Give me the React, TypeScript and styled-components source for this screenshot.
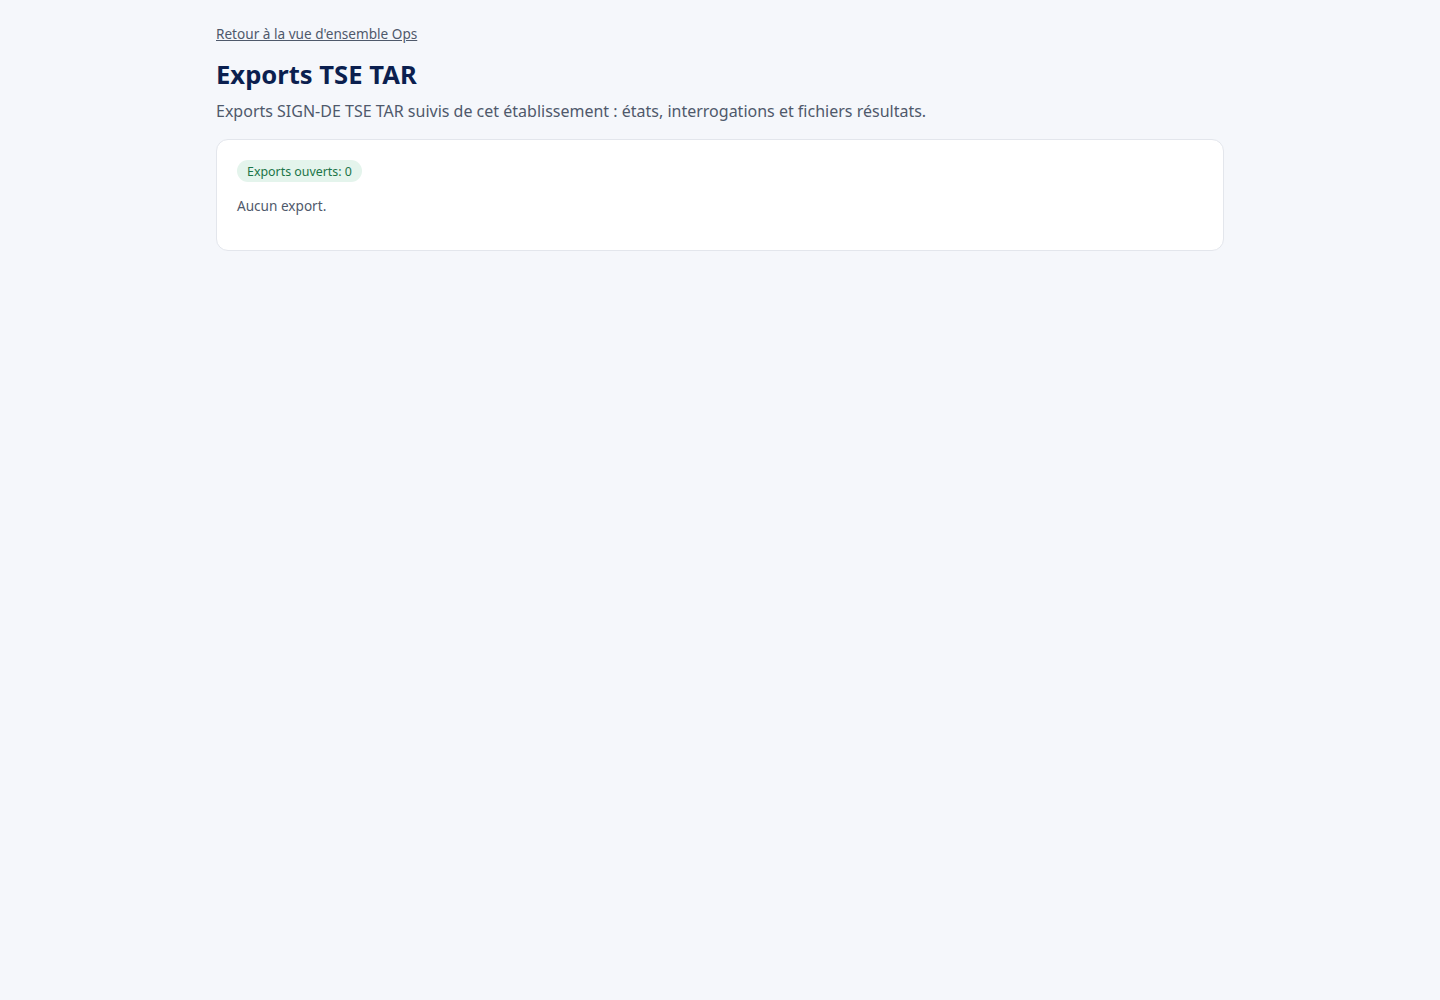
import React from "react";
import styled, { createGlobalStyle } from "styled-components";

const GlobalStyle = createGlobalStyle`
  html, body {
    margin: 0;
    padding: 0;
    background: #f5f7fb;
    font-family: "Noto Sans", "Open Sans", sans-serif;
  }
`;

const Page = styled.main`
  max-width: 1008px;
  margin: 0 auto;
  padding: 22px 0 24px;
`;

const BackLink = styled.a`
  display: inline-block;
  font-size: 13.6px;
  line-height: 20px;
  color: #4f596b;
  text-decoration: underline;
  cursor: pointer;
`;

const Title = styled.h1`
  margin: 13px 0 0;
  font-size: 25.6px;
  line-height: 36px;
  font-weight: 700;
  color: #0b1f4f;
`;

const Subtitle = styled.p`
  margin: 6px 0 0;
  font-size: 16px;
  line-height: 24px;
  color: #4f596b;
`;

const Card = styled.section`
  margin-top: 16px;
  background: #ffffff;
  border: 1px solid #e3e6ec;
  border-radius: 12px;
  padding: 20px 20px 34px;
  display: flex;
  flex-direction: column;
  align-items: flex-start;
  gap: 14px;
`;

const Badge = styled.span<{ $tone: "success" | "neutral" }>`
  display: inline-flex;
  align-items: center;
  height: 22px;
  padding: 0 10px;
  border-radius: 999px;
  font-size: 12.4px;
  background: ${(p) => (p.$tone === "success" ? "#e4f4ec" : "#eef0f4")};
  color: ${(p) => (p.$tone === "success" ? "#1b7548" : "#4f596b")};
`;

const EmptyText = styled.p`
  margin: 0;
  font-size: 13.6px;
  line-height: 20px;
  color: #4f596b;
`;

export default function App() {
  const openExports = 0;
  return (
    <>
      <GlobalStyle />
      <Page>
        <BackLink>Retour à la vue d'ensemble Ops</BackLink>
        <Title>Exports TSE TAR</Title>
        <Subtitle>
          Exports SIGN-DE TSE TAR suivis de cet établissement : états, interrogations et fichiers résultats.
        </Subtitle>
        <Card>
          <Badge $tone="success">Exports ouverts: {openExports}</Badge>
          <EmptyText>Aucun export.</EmptyText>
        </Card>
      </Page>
    </>
  );
}
